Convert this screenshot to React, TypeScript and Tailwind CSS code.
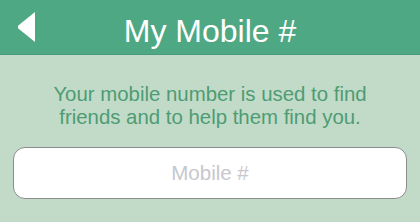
export default function App() {
  return (
    <div className="w-[420px] h-[222px] bg-[#c1dbc8] overflow-hidden" style={{ fontFamily: '"Liberation Sans", Arial, sans-serif' }}>
      {/* nav bar */}
      <div className="relative h-[55px] bg-[#4fa884] border-b border-[#489c79] flex items-center justify-center pt-[8px]">
        <button className="absolute left-[17px] top-[12px]" aria-label="Back">
          <svg width="18" height="30" viewBox="0 0 18 30">
            <polygon points="18,0 18,30 1,16.2 1,13.8" fill="#ffffff" />
          </svg>
        </button>
        <h1 className="text-white text-[32px] leading-[37px] font-normal">My Mobile #</h1>
      </div>

      <div className="px-[13px] pt-[28px]">
        <p className="text-center text-[#4f9b74] text-[20.4px] leading-[23px]">
          Your mobile number is used to find
          <br />
          friends and to help them find you.
        </p>
        <input
          type="tel"
          placeholder="Mobile #"
          className="mt-[18px] w-[394px] h-[52px] bg-white rounded-[12px] border border-[#8c8c8c] text-center text-[20.5px] text-gray-800 placeholder:text-[#c7c7cd] outline-none"
        />
      </div>
    </div>
  )
}
